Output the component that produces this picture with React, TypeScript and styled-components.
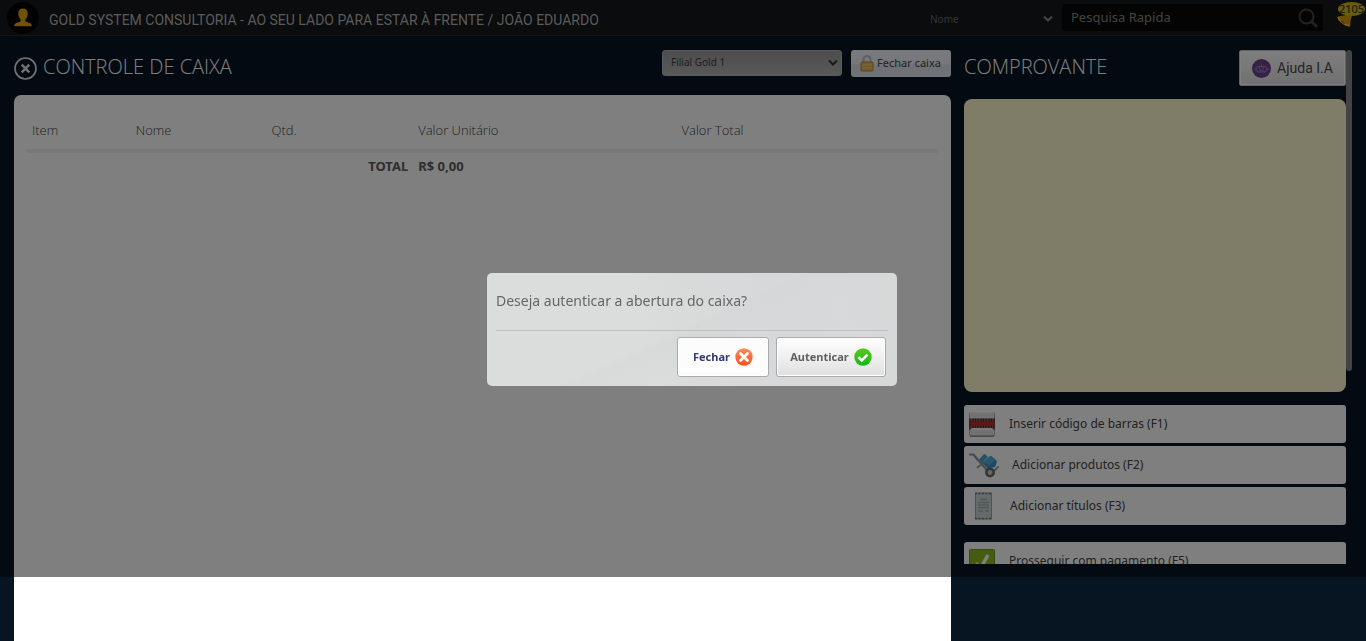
import React from "react";
import styled, { createGlobalStyle, css } from "styled-components";

const body = `"Noto Sans", "Open Sans", sans-serif`;
const light = `"Open Sans", "Noto Sans", sans-serif`;
const label = `Roboto, "Open Sans", sans-serif`;

const GlobalStyle = createGlobalStyle`
  *, *::before, *::after { box-sizing: border-box; }
  html, body { margin: 0; background: #071422; }
  body { font-family: ${body}; font-size: 12px; color: #555; }
  button, input, select { font-family: inherit; margin: 0; }
`;

const Page = styled.div`
  min-height: 100vh;
  max-height: 100vh;
  overflow: hidden;
  display: flex;
  flex-direction: column;
  background: #071422;
`;

const TopBar = styled.header`
  flex: none;
  height: 36px;
  display: flex;
  align-items: center;
  padding: 0 0 0 7px;
  background: #14181a;
  border-bottom: 1px solid #2c2624;
`;

const Avatar = styled.span`
  width: 32px;
  height: 32px;
  border-radius: 50%;
  background: #050505;
  display: grid;
  place-items: center;
`;

const Company = styled.h1`
  flex: 1;
  margin: 0 0 0 10px;
  font: 400 14px/20px ${label};
  padding-top: 4px;
  color: #b4b4b4;
  white-space: nowrap;
`;

const SelectWrap = styled.span<{ $kind: "filter" | "branch" }>`
  display: grid;
  align-items: center;
  > * { grid-area: 1 / 1; }
  > svg { justify-self: end; pointer-events: none; }
  ${(p) => p.$kind === "filter"
    ? css`width: 132px; margin-right: 6px; > svg { margin: 3px 3px 0 0; } color: #8a8a8a;`
    : css`width: 180px; height: 26px; > svg { margin-right: 4px; } color: #333;`}
`;

const FilterSelect = styled.select`
  appearance: none;
  width: 100%;
  height: 26px;
  padding: 2px 0 0 6px;
  border: 0;
  background: transparent;
  color: #6e6e6e;
  font-size: 10px;
`;

const BranchSelect = styled.select`
  appearance: none;
  width: 100%;
  height: 26px;
  padding: 0 20px 2px 8px;
  border: 1px solid #b4b4b4;
  border-radius: 3px;
  background: linear-gradient(#9a9a9a, #b2b2b2);
  color: #3c3c3c;
  font-size: 10px;
`;

const Search = styled.div`
  width: 261px;
  height: 27px;
  display: flex;
  align-items: center;
  padding: 0 5px 0 9px;
  border-radius: 3px;
  background: #090909;
`;

const SearchInput = styled.input`
  flex: 1;
  min-width: 0;
  padding: 0 0 2px;
  border: 0;
  outline: 0;
  background: transparent;
  font-size: 13px;
  color: #999;
  &::placeholder { color: #868686; opacity: 1; }
`;

const IconButton = styled.button`
  padding: 0;
  border: 0;
  background: transparent;
  display: grid;
  place-items: center;
`;

const Alerts = styled.button`
  position: relative;
  width: 29px;
  height: 27px;
  margin-left: 14px;
  padding: 0;
  border: 0;
  background: transparent;
  align-self: flex-start;
`;

const Bell = styled.svg`
  position: absolute;
  left: 0;
  top: 14px;
`;

const Count = styled.span`
  position: absolute;
  left: 1px;
  top: 2px;
  width: 27px;
  height: 14px;
  border-radius: 50%;
  background: #d0bc18;
  color: #3a3a30;
  font: 500 11px/14px ${body};
  text-align: center;
`;

const Content = styled.main`
  flex: 1;
  min-height: 0;
  display: grid;
  grid-template-columns: minmax(0, 1fr) 388px;
  column-gap: 13px;
  padding: 14px 14px 0;
`;

const Register = styled.section`
  display: flex;
  flex-direction: column;
`;

const TitleRow = styled.div`
  flex: none;
  height: 36px;
  display: flex;
  align-items: flex-start;
`;

const Title = styled.h2`
  flex: 1;
  margin: 0;
  font: 300 20px/34px ${light};
  color: #fff;
  white-space: nowrap;
`;

const CloseButton = styled(IconButton)`
  width: 23px;
  height: 23px;
  margin: 7px 6px 0 0;
`;

const CloseRegister = styled.button`
  width: 100px;
  height: 27px;
  margin-left: 9px;
  display: flex;
  align-items: center;
  justify-content: center;
  gap: 3px;
  padding: 0 1px 2px 0;
  border: 0;
  border-radius: 3px;
  background: linear-gradient(#f4f6fa 0, #eceff6 50%, #dce1ec 56%, #e2e6f0);
  color: #444;
  font-size: 11px;
  white-space: nowrap;
  > svg { margin-top: 2px; }
`;

const Panel = styled.div`
  flex: 1;
  margin-top: 9px;
  padding: 16px 13px;
  border-radius: 7px 7px 0 0;
  background: #fff;
`;

const Items = styled.table`
  width: 100%;
  border-collapse: collapse;
  table-layout: fixed;
  color: #444;
  th, td { padding: 0 5px; text-align: left; }
  th { height: 38px; font: 300 13px/38px ${light}; }
  thead { border-bottom: 4px solid #f0f0f0; }
  td { font: 700 13px/26px ${body}; color: #5c5c5c; }
`;

const TotalLabel = styled.td`
  && { text-align: right; }
`;

const Side = styled.aside`
  height: calc(90vh - 63px);
  display: flex;
  align-items: flex-start;
  overflow: hidden;
`;

const SideBody = styled.div`
  flex: 1;
  min-width: 0;
`;

const ScrollThumb = styled.div`
  width: 6px;
  height: 62.5%;
  border-radius: 3px;
  background: #868686;
`;

const HelpButton = styled.button`
  width: 107px;
  height: 36px;
  display: flex;
  align-items: center;
  justify-content: center;
  gap: 6px;
  padding: 0;
  border: 1px solid #c4c4c4;
  border-radius: 2px;
  box-shadow: inset 0 0 0 1px #fff;
  background: linear-gradient(#fdfdfd, #e2e2e2);
  color: #4a4a4a;
  font: 14px/20px ${label};
  white-space: nowrap;
`;

const Receipt = styled.div`
  height: 293px;
  margin: 13px 0;
  border-radius: 8px;
  background: #fffbcf;
`;

const Actions = styled.div`
  display: flex;
  flex-direction: column;
  gap: 3px;
  margin-bottom: 17px;
`;

const Action = styled.button`
  width: 100%;
  height: 38px;
  display: flex;
  align-items: center;
  gap: 13px;
  padding: 0 4px;
  border: 0;
  border-radius: 3px;
  background: #fff;
  color: #444;
  font-size: 12px;
  text-align: left;
`;

const ActionLabel = styled.span`
  padding-bottom: 2px;
`;

const Shade = styled.div`
  position: fixed;
  inset: 0 0 auto;
  height: 90vh;
  background: rgba(0, 0, 0, 0.5);
`;

const Dialog = styled.div`
  position: fixed;
  top: 273px;
  left: calc(50% - 196px);
  width: 410px;
  padding: 9px;
  border-radius: 5px;
  background:
    linear-gradient(155deg, transparent 48%, rgba(208, 211, 211, 0.25) 50%, transparent 62%),
    linear-gradient(72deg, #dbdddc 0 40%, #d9dbda 48%, #d7d8da 70%, #d7d9d9);
`;

const Question = styled.p`
  margin: 0;
  height: 49px;
  padding: 9px 0 0;
  border-bottom: 1px solid #bfc1c1;
  font-size: 14px;
  line-height: 20px;
  color: #666;
`;

const Answers = styled.div`
  display: flex;
  justify-content: flex-end;
  gap: 7px;
  padding: 6px 2px 0 0;
`;

const Answer = styled.button<{ $main?: boolean }>`
  width: ${(p) => (p.$main ? 110 : 92)}px;
  height: 40px;
  display: flex;
  align-items: center;
  justify-content: center;
  gap: 5px;
  padding: 0 0 1px;
  border: 1px solid #aaa;
  border-radius: 3px;
  box-shadow: inset 0 0 0 1px #fff;
  background: ${(p) => (p.$main ? "linear-gradient(#fff, #e0e0e0)" : "#fcfcfc")};
  color: ${(p) => (p.$main ? "#606060" : "#343a72")};
  font-size: 11px;
  font-weight: 700;
`;

const Chevron = () => (
  <svg width="10" height="8" viewBox="0 0 10 8" fill="none" stroke="currentColor" strokeWidth="2">
    <path d="M1 1.5 5 5.5 9 1.5" />
  </svg>
);

const BarcodeIcon = () => (
  <svg width="28" height="28" viewBox="0 0 28 28">
    <rect x="1.5" y="1.5" width="25" height="25" rx="2" fill="#e4e4e4" stroke="#a8a8a8" />
    <path d="M1 1.500h26" stroke="#fff" strokeWidth="2" />
    <path d="M2 26h24" stroke="#808080" />
    <rect x="1" y="8.500" width="26" height="10" fill="#8d6464" />
    <path d="M2 8.500v11M5 8.500v10M7.500 8.500v10M10 8.500v10M13 8.500v10M15.500 8.500v10M18 8.500v10M21 8.500v10M23.500 8.500v10M26 8.500v11" stroke="#4c3030" strokeWidth="1.300" />
    <path d="M4 19h20" stroke="#f4f4f4" strokeWidth="2" />
    <rect x="2" y="12" width="24" height="3.500" fill="#c02020" />
    <path d="M2 13.700h24" stroke="#ee2424" strokeWidth="1.300" />
  </svg>
);

const TrolleyIcon = () => (
  <svg width="31" height="28" viewBox="0 0 31 28" fill="none">
    <path d="M2 3.500h3.500L10 9l9 10" stroke="#8b9494" strokeWidth="2.200" strokeLinecap="round" strokeLinejoin="round" />
    <path d="M9.500 16.500l6-5M25 21l5-5" stroke="#98a0a0" strokeWidth="1.800" strokeLinecap="round" />
    <path d="M11 8.500L15.500 3.500q1-.8 2 0L20 6l-6 6z" fill="#4ea6cc" />
    <path d="M14.500 12l7-6.500q1.200-.8 2.300 0L28 9q1 1 .8 2.500L27 16l-7 1.500z" fill="#3d8fc6" />
    <path d="M15.500 11.500l6.500-6q.8-.5 1.600 0L27.500 9l-6 5z" fill="#55aee0" />
    <circle cx="22" cy="21.500" r="3.700" stroke="#6a6e6e" strokeWidth="2.600" fill="#ccc" />
  </svg>
);

const SlipIcon = () => (
  <svg width="29" height="28" viewBox="0 0 29 28">
    <rect x="7.500" y="1" width="16" height="26" fill="#cbd5d5" stroke="#9aa6a6" />
    <path d="M7 1.500h17M7 26.500h17" stroke="#6d7979" strokeWidth="1.500" strokeDasharray="2 1.500" />
    <path d="M12 7.500h7M10 10.500h11M10 13h11M10 15.500h11M10 19h5M17 19h4" stroke="#a2adad" strokeWidth="1.300" />
  </svg>
);

const ConfirmIcon = () => (
  <svg width="28" height="28" viewBox="0 0 28 28">
    <rect x="1.500" y="2.500" width="25" height="25" rx="1" fill="#8cb823" stroke="#6f941a" />
    <path d="M8 16.500l4.500 5L20 8" fill="none" stroke="#fff" strokeWidth="3.500" />
  </svg>
);

const actions = [
  { label: "Inserir código de barras (F1)", icon: <BarcodeIcon /> },
  { label: "Adicionar produtos (F2)", icon: <TrolleyIcon /> },
  { label: "Adicionar títulos (F3)", icon: <SlipIcon /> },
];

export default function App() {
  return (
    <>
      <GlobalStyle />
      <Page>
        <TopBar>
          <Avatar>
            <svg width="18" height="19" viewBox="0 0 18 19" fill="#e0a808">
              <path d="M9 0.500c3 0 4.800 2 4.700 5 0 2.600-1 4.800-2.400 6v1.800c1.500 1 5 1.300 6 3 .4.700.5 1.500.5 2H.2c0-.5.1-1.300.5-2 1-1.700 4.500-2 6-3v-1.800c-1.400-1.200-2.400-3.400-2.400-6C4.200 2.500 6 .5 9 .5z" />
            </svg>
          </Avatar>
          <Company>GOLD SYSTEM CONSULTORIA - AO SEU LADO PARA ESTAR À FRENTE / JOÃO EDUARDO</Company>
          <SelectWrap $kind="filter">
            <FilterSelect aria-label="Filtro da pesquisa">
              <option>Nome</option>
            </FilterSelect>
            <Chevron />
          </SelectWrap>
          <Search>
            <SearchInput type="text" placeholder="Pesquisa Rapida" aria-label="Pesquisa Rapida" />
            <IconButton aria-label="Pesquisar">
              <svg width="20" height="20" viewBox="0 0 20 20" fill="none" stroke="#454545">
                <circle cx="8.500" cy="8.500" r="7" strokeWidth="2" />
                <path d="M13.500 13.500l4.500 4.500" strokeWidth="3" strokeLinecap="round" />
              </svg>
            </IconButton>
          </Search>
          <Alerts aria-label="Notificações">
            <Bell width="16" height="13" viewBox="0 0 16 13">
              <path d="M14.500 0.500C12 .2 9 1 6.500 1.500 4.500 2 2.500 2 1 2.500.3 4 2 7.500 5.500 10c3 2 6 2.600 7.500 2.200.8-1.200.2-2.700.4-4.200C13.700 5.500 15 3 15 1z" fill="#d89a10" />
              <path d="M1 3c.5 3 6 8 11.500 9" fill="none" stroke="#f4c83c" strokeWidth="1.500" />
              <path d="M3.500 6.500c1.500-.5 4 1.500 4.500 3.500-1.700 0-4-1.700-4.500-3.500z" fill="#a86010" />
            </Bell>
            <Count>2105</Count>
          </Alerts>
        </TopBar>

        <Content>
          <Register>
            <TitleRow>
              <CloseButton aria-label="Fechar">
                <svg width="23" height="23" viewBox="0 0 23 23" fill="none" stroke="#e4e4e4">
                  <circle cx="11.500" cy="11.500" r="10.500" strokeWidth="1.700" />
                  <path d="M7.700 7.700l7.600 7.600M15.300 7.700l-7.600 7.600" strokeWidth="2.500" />
                </svg>
              </CloseButton>
              <Title>CONTROLE DE CAIXA</Title>
              <SelectWrap $kind="branch">
                <BranchSelect aria-label="Filial">
                  <option>Filial Gold 1</option>
                </BranchSelect>
                <Chevron />
              </SelectWrap>
              <CloseRegister>
                <svg width="14" height="17" viewBox="0 0 14 17">
                  <path d="M3.500 8V4.500a3.500 3.500 0 0 1 7 0V8" fill="none" stroke="#b9bcc4" strokeWidth="2" />
                  <rect x="1" y="7" width="12" height="9" rx="1" fill="#e8b450" stroke="#c08a28" />
                  <path d="M2 10h10M2 13h10" stroke="#f6d488" />
                </svg>
                Fechar caixa
              </CloseRegister>
            </TitleRow>
            <Panel>
              <Items>
                <colgroup>
                  <col width="11.4%" />
                  <col width="14.9%" />
                  <col width="16.1%" />
                  <col width="28.9%" />
                  <col />
                </colgroup>
                <thead>
                  <tr>
                    <th scope="col">Item</th>
                    <th scope="col">Nome</th>
                    <th scope="col">Qtd.</th>
                    <th scope="col">Valor Unitário</th>
                    <th scope="col">Valor Total</th>
                  </tr>
                </thead>
                <tbody>
                  <tr>
                    <TotalLabel colSpan={3}>TOTAL</TotalLabel>
                    <td colSpan={2}>R$ 0,00</td>
                  </tr>
                </tbody>
              </Items>
            </Panel>
          </Register>

          <Side>
            <SideBody>
              <TitleRow>
                <Title>COMPROVANTE</Title>
                <HelpButton>
                  <svg width="19" height="19" viewBox="0 0 19 19">
                    <circle cx="9.500" cy="9.500" r="9.500" fill="#6a4290" />
                    <g fill="none" stroke="#a88cc8" strokeWidth="0.900">
                      <path d="M5.500 7.500h8l1.500 2.500-1.500 3h-8L4 10zM9.500 4.500v3M3 9v2.500M16 9v2.500M7.500 11.300h4" />
                      <circle cx="7.500" cy="9.300" r=".5" />
                      <circle cx="11.500" cy="9.300" r=".5" />
                    </g>
                  </svg>
                  Ajuda I.A
                </HelpButton>
              </TitleRow>
              <Receipt />
              <Actions>
                {actions.map((a) => (
                  <Action key={a.label}>
                    {a.icon}
                    <ActionLabel>{a.label}</ActionLabel>
                  </Action>
                ))}
              </Actions>
              <Action>
                <ConfirmIcon />
                <ActionLabel>Prosseguir com pagamento (F5)</ActionLabel>
              </Action>
            </SideBody>
            <ScrollThumb />
          </Side>
        </Content>
      </Page>

      <Shade />
      <Dialog role="dialog" aria-modal="true" aria-labelledby="question">
        <Question id="question">Deseja autenticar a abertura do caixa?</Question>
        <Answers>
          <Answer>
            Fechar
            <svg width="18" height="18" viewBox="0 0 18 18">
              <defs>
                <linearGradient id="red" x2="0" y2="1">
                  <stop stopColor="#ff8a5c" />
                  <stop offset="1" stopColor="#f4521c" />
                </linearGradient>
              </defs>
              <circle cx="9" cy="9" r="8.700" fill="url(#red)" />
              <path d="M5.500 5.500l7 7M12.500 5.500l-7 7" stroke="#fff" strokeWidth="2.800" strokeLinecap="round" />
            </svg>
          </Answer>
          <Answer $main>
            Autenticar
            <svg width="18" height="18" viewBox="0 0 18 18">
              <defs>
                <linearGradient id="green" x2="0" y2="1">
                  <stop stopColor="#5cc81c" />
                  <stop offset="1" stopColor="#10b818" />
                </linearGradient>
              </defs>
              <circle cx="9" cy="9" r="8.700" fill="url(#green)" />
              <path d="M4.500 9.200l3.200 3.200 5.800-5.800" fill="none" stroke="#fff" strokeWidth="2.600" />
            </svg>
          </Answer>
        </Answers>
      </Dialog>
    </>
  );
}
